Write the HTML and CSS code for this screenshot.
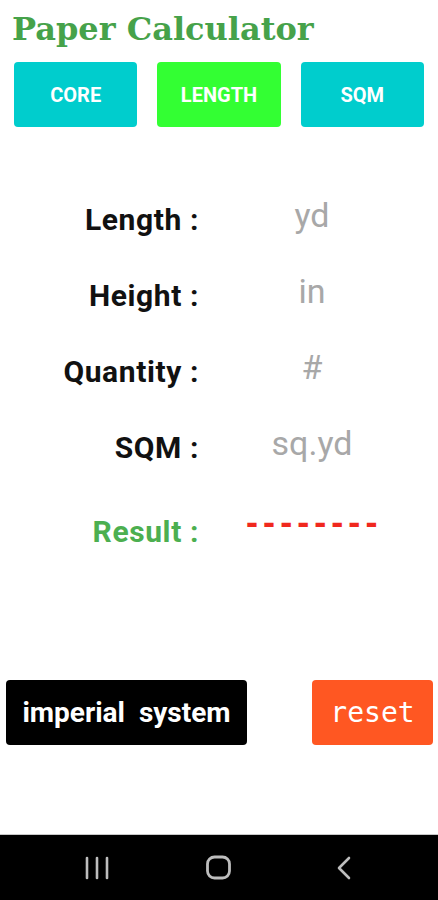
FILE: index.html
```html
<!DOCTYPE html>
<html lang="en">
<head>
<meta charset="utf-8">
<title>Paper Calculator</title>
<link rel="stylesheet" href="styles.css">
</head>
<body>
<div class="screen">
  <main class="app">
    <h1 class="title">Paper Calculator</h1>
    <nav class="tabs">
      <button class="tab tab-cyan">CORE</button>
      <button class="tab tab-green">LENGTH</button>
      <button class="tab tab-cyan">SQM</button>
    </nav>
    <section class="form">
      <div class="row">
        <span class="label">Length :</span>
        <span class="field">yd</span>
      </div>
      <div class="row">
        <span class="label">Height :</span>
        <span class="field">in</span>
      </div>
      <div class="row">
        <span class="label">Quantity :</span>
        <span class="field">#</span>
      </div>
      <div class="row">
        <span class="label">SQM :</span>
        <span class="field">sq.yd</span>
      </div>
      <div class="row row-result">
        <span class="label label-result">Result :</span>
        <span class="field field-result">--------</span>
      </div>
    </section>
    <div class="actions">
      <button class="btn btn-black">imperial&nbsp; system</button>
      <button class="btn btn-orange">reset</button>
    </div>
  </main>
  <footer class="navbar">
    <svg class="nav-icon" width="26" height="26" viewBox="0 0 26 26">
      <g stroke="#bdbdbd" stroke-width="2.6" stroke-linecap="round">
        <line x1="3" y1="3" x2="3" y2="23"/>
        <line x1="13" y1="3" x2="13" y2="23"/>
        <line x1="23" y1="3" x2="23" y2="23"/>
      </g>
    </svg>
    <svg class="nav-icon" width="28" height="26" viewBox="0 0 28 26">
      <rect x="2.5" y="2" width="22" height="21" rx="7" fill="none" stroke="#bdbdbd" stroke-width="2.8"/>
    </svg>
    <svg class="nav-icon" width="20" height="26" viewBox="0 0 20 26">
      <polyline points="14,3 4,13 14,23" fill="none" stroke="#bdbdbd" stroke-width="2.6" stroke-linecap="round" stroke-linejoin="round"/>
    </svg>
  </footer>
</div>
</body>
</html>
```

FILE: styles.css
```css
* { box-sizing: border-box; }

html, body {
  margin: 0;
  padding: 0;
  background: #ffffff;
}

.screen {
  width: 438px;
  height: 900px;
  display: flex;
  flex-direction: column;
  font-family: Roboto, "Noto Sans", sans-serif;
}

.app {
  flex: 1;
  display: flex;
  flex-direction: column;
}

.title {
  margin: 0;
  padding: 13px 0 0 12px;
  font-family: "DejaVu Serif", "Liberation Serif", serif;
  font-weight: bold;
  font-size: 32px;
  line-height: 32px;
  color: #46a24a;
}

.tabs {
  display: grid;
  grid-template-columns: repeat(3, 1fr);
  column-gap: 20px;
  padding: 0 14px;
  margin-top: 17px;
}

.tab {
  height: 65px;
  border: none;
  border-radius: 4px;
  color: #ffffff;
  font-family: Roboto, sans-serif;
  font-weight: bold;
  font-size: 20px;
  padding: 0;
}

.tab-cyan { background: #00cdcd; }
.tab-green { background: #33ff33; }

.form {
  margin-top: 55px;
  display: flex;
  flex-direction: column;
}

.row {
  height: 76px;
  display: grid;
  grid-template-columns: 200px 1fr;
  column-gap: 20px;
  padding-right: 34px;
  align-items: center;
}

.label {
  text-align: right;
  padding-right: 1px;
  font-weight: bold;
  font-size: 30px;
  line-height: 30px;
  letter-spacing: 0.6px;
  color: #111111;
}

.field {
  text-align: center;
  font-size: 34px;
  line-height: 34px;
  color: #a8a8a8;
  position: relative;
  top: -5px;
}

.row-result {
  margin-top: 8px;
}

.label-result {
  color: #4caf50;
}

.field-result {
  font-family: "DejaVu Sans", sans-serif;
  color: #f0281e;
  font-weight: bold;
  font-size: 30px;
  line-height: 30px;
  letter-spacing: 4.6px;
  top: -8px;
  left: 2px;
}

.actions {
  margin-top: 110px;
  display: flex;
  justify-content: space-between;
  padding: 0 5px 0 6px;
}

.btn {
  height: 65px;
  border: none;
  border-radius: 4px;
  color: #ffffff;
  padding: 0;
}

.btn-black {
  width: 241px;
  background: #000000;
  font-family: Roboto, sans-serif;
  font-weight: bold;
  font-size: 28px;
}

.btn-orange {
  width: 121px;
  background: #ff5722;
  font-family: "DejaVu Sans Mono", monospace;
  font-size: 28px;
}

.navbar {
  height: 66px;
  background: #000000;
  border-top: 1px solid #c8c8c8;
  display: grid;
  grid-template-columns: repeat(3, 1fr);
  justify-items: center;
  align-items: center;
}

.nav-icon:first-child { margin-left: 48px; }
.nav-icon:last-child { margin-right: 40px; }
```
